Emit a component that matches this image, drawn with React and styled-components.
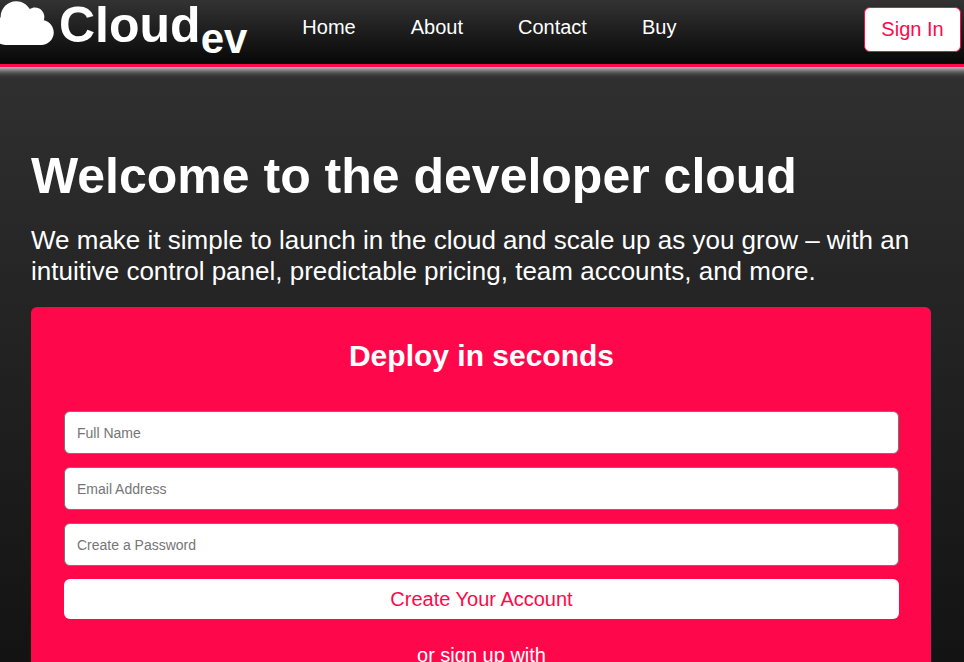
import React from "react";
import styled, { createGlobalStyle } from "styled-components";

const PINK = "#ff084b";

const GlobalStyle = createGlobalStyle`
  *, *::before, *::after { box-sizing: border-box; }
  body {
    margin: 0;
    font-family: "Liberation Sans", Arial, sans-serif;
    color: #fff;
    background: #131313;
  }
`;

const Page = styled.div`
  height: 100vh;
  display: flex;
  flex-direction: column;
  overflow: hidden;
  background: linear-gradient(#333, #131313);
`;

const Header = styled.header`
  display: flex;
  align-items: flex-start;
  flex: none;
  height: 67px;
  padding-right: 3px;
  border-bottom: 3px solid ${PINK};
  background: linear-gradient(#333, #050505);
  background-origin: border-box;
  box-shadow: 0 -8px 8px 10px #fff;
  z-index: 1;
`;

const Logo = styled.a`
  display: flex;
  align-items: flex-start;
  margin-left: -9px;
  color: #fff;
  text-decoration: none;
  font-size: 50px;
  line-height: 50px;
  font-weight: bold;
`;

const CloudIcon = styled.svg`
  width: 63px;
  height: 50px;
  margin: -2px 5px 0 0;
  fill: currentColor;
`;

const LogoSub = styled.sub`
  font-size: 42px;
  line-height: 42px;
`;

const Nav = styled.nav`
  display: flex;
  flex: 1;
  gap: 55px;
  padding: 16px 0 0 55px;
`;

const NavLink = styled.a`
  color: #fff;
  font-size: 20px;
  line-height: 23px;
  text-decoration: none;
`;

const Button = styled.button`
  height: 40px;
  border: 0;
  border-radius: 6px;
  background: #fff;
  color: ${PINK};
  font-family: inherit;
  font-size: 20px;
  cursor: pointer;
`;

const SignInButton = styled(Button)`
  min-width: 97px;
  height: 45px;
  margin-top: 7px;
  padding: 0 16px;
  border: 1px solid ${PINK};
`;

const Scroll = styled.div`
  flex: 1;
  min-height: 0;
  overflow-y: auto;
  scrollbar-width: none;
`;

const Main = styled.main`
  padding: 80px 33px 32px 31px;
`;

const Title = styled.h1`
  margin: 0;
  font-size: 50px;
  line-height: 58px;
`;

const Intro = styled.p`
  margin: 20px 0;
  font-size: 26px;
  line-height: 31px;
`;

const Panel = styled.form`
  display: flex;
  flex-direction: column;
  gap: 13px;
  padding: 32px 32px 32px 33px;
  border-radius: 6px;
  background: ${PINK};
  text-align: center;
`;

const PanelTitle = styled.h2`
  margin: 0 0 25px;
  font-size: 30px;
  line-height: 34px;
`;

const Field = styled.input`
  width: 100%;
  height: 43px;
  padding: 0 12px;
  border: 1px solid #767676;
  border-radius: 6px;
  background: #fff;
  color: #222;
  font-family: inherit;
  font-size: 14px;
  &::placeholder { color: #757575; }
`;

const Alternative = styled.p`
  margin: 12px 0 0;
  font-size: 20px;
  line-height: 23px;
`;

const links = ["Home", "About", "Contact", "Buy"];
const fields = [
  { label: "Full Name", type: "text" },
  { label: "Email Address", type: "email" },
  { label: "Create a Password", type: "password" },
];

export default function App() {
  return (
    <Page>
      <GlobalStyle />
      <Header>
        <Logo href="#">
          <CloudIcon viewBox="0 0 640 512" aria-hidden="true">
            <path d="M537.6 226.6c4.1-10.7 6.4-22.4 6.4-34.6 0-53-43-96-96-96-19.7 0-38.1 6-53.3 16.2C367 64.2 315.3 32 256 32c-88.4 0-160 71.6-160 160 0 2.7.1 5.4.2 8.1C40.2 219.8 0 273.2 0 336c0 79.5 64.5 144 144 144h368c70.7 0 128-57.3 128-128 0-61.9-44-113.6-102.4-125.4z" />
          </CloudIcon>
          <span>
            Cloud<LogoSub>ev</LogoSub>
          </span>
        </Logo>
        <Nav>
          {links.map((link) => (
            <NavLink key={link} href="#">{link}</NavLink>
          ))}
        </Nav>
        <SignInButton type="button">Sign In</SignInButton>
      </Header>
      <Scroll>
        <Main>
          <Title>Welcome to the developer cloud</Title>
          <Intro>
            We make it simple to launch in the cloud and scale up as you grow – with an
            intuitive control panel, predictable pricing, team accounts, and more.
          </Intro>
          <Panel onSubmit={(event) => event.preventDefault()}>
            <PanelTitle>Deploy in seconds</PanelTitle>
            {fields.map(({ label, type }) => (
              <Field key={label} type={type} placeholder={label} aria-label={label} />
            ))}
            <Button type="submit">Create Your Account</Button>
            <Alternative>or sign up with</Alternative>
          </Panel>
        </Main>
      </Scroll>
    </Page>
  );
}
